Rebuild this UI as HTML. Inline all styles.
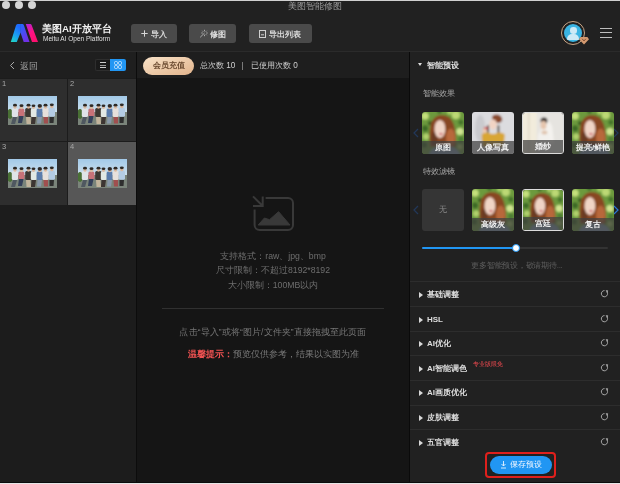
<!DOCTYPE html>
<html><head><meta charset="utf-8">
<style>
*{margin:0;padding:0;box-sizing:border-box}
html,body{width:620px;height:484px;overflow:hidden;background:#212121;font-family:"Liberation Sans",sans-serif;color:#ddd}
.a{position:absolute}
.t,.btn span,.acc,.lbl,.gs{will-change:transform}
.t{white-space:nowrap;line-height:10px}
.dot{width:8px;height:8px;border-radius:50%;background:#d4d4d4;top:1px}
.btn{background:#4a4a4a;border-radius:3px;height:19px;top:24px;font-size:8.3px;font-weight:bold;color:#dcdcdc;line-height:19px}
.cell{background:#2e2e2e}
.num{font-size:7.5px;color:#a8a8a8;left:2px;top:0.5px;line-height:8px;will-change:transform}
.ph{left:8px;top:17px;width:49px;height:29px;overflow:hidden;
 background:linear-gradient(180deg,#9cc8e8 0%,#b6d6ee 40%,#7a8a80 62%,#606860 100%)}
.tile{width:42px;height:42px;border-radius:3px;overflow:hidden}
.lbl{left:0;bottom:0;width:100%;height:13px;background:rgba(64,64,64,.72);font-size:8px;font-weight:bold;line-height:13px;text-align:center;color:#f0f0f0;white-space:nowrap}
.sep{left:410px;width:210px;height:1px;background:#2d2d2d}
.tri{margin-top:0.5px;width:0;height:0;border-top:3px solid transparent;border-bottom:3px solid transparent;border-left:4px solid #d8d8d8}
.acc{left:427px;font-size:8px;font-weight:bold;color:#dedede;line-height:10px;white-space:nowrap;margin-top:1px}
.rf{left:601px}
</style></head>
<body>
<svg width="0" height="0" style="position:absolute">
<defs>
<filter id="bl" x="-5%" y="-5%" width="110%" height="110%"><feGaussianBlur stdDeviation="0.6"/></filter>
<filter id="bl2" x="-5%" y="-5%" width="110%" height="110%"><feGaussianBlur stdDeviation="1.1"/></filter>
<linearGradient id="sky" x1="0" y1="0" x2="0" y2="1"><stop offset="0" stop-color="#a0c8e8"/><stop offset="1" stop-color="#cce0ee"/></linearGradient>
<symbol id="grp" viewBox="0 0 49 29">
 <g filter="url(#bl)">
 <rect x="-1" y="-1" width="51" height="17" fill="url(#sky)"/>
 <rect x="-1" y="16" width="51" height="14" fill="#7a847a"/>
 <ellipse cx="2" cy="18" rx="3" ry="5" fill="#4a7036"/>
 <g>
  <rect x="3.8" y="12" width="6.2" height="9" rx="1.5" fill="#dfe4e8"/>
  <rect x="10.4" y="12.5" width="6" height="8" rx="1.5" fill="#c87278"/>
  <rect x="17.2" y="12" width="6.4" height="9" rx="1.5" fill="#3e3832"/>
  <rect x="22.8" y="12.5" width="6" height="8.5" rx="1.5" fill="#e2e8e4"/>
  <rect x="28.6" y="12.5" width="6" height="8.5" rx="1.5" fill="#5a7cac"/>
  <rect x="34.6" y="12" width="6.2" height="9" rx="1.5" fill="#e6e0dc"/>
  <rect x="40.6" y="11.8" width="6.4" height="9" rx="1.5" fill="#b4cce4"/>
 </g>
 <g fill="#d8b8a0">
  <ellipse cx="7" cy="10.8" rx="1.7" ry="1.9"/><ellipse cx="13.5" cy="11.3" rx="1.7" ry="1.9"/><ellipse cx="20.5" cy="10.8" rx="1.7" ry="1.9"/><ellipse cx="25.5" cy="11.3" rx="1.6" ry="1.8"/><ellipse cx="31.8" cy="11.3" rx="1.8" ry="1.9"/><ellipse cx="37.5" cy="10.8" rx="1.7" ry="1.9"/><ellipse cx="43.8" cy="10.4" rx="1.7" ry="1.9"/>
 </g>
 <g fill="#2e2a28">
  <ellipse cx="7" cy="9.2" rx="2" ry="1.4"/><ellipse cx="13.5" cy="9.7" rx="2" ry="1.4"/><ellipse cx="20.5" cy="9.2" rx="2" ry="1.4"/><ellipse cx="25.5" cy="9.7" rx="1.9" ry="1.3"/><ellipse cx="31.8" cy="9.9" rx="2.2" ry="1.8"/><ellipse cx="37.5" cy="9.2" rx="2" ry="1.4"/><ellipse cx="43.8" cy="8.8" rx="2" ry="1.4"/>
 </g>
 <g>
  <path d="M5 21 L9 21 L7 28 L3 28 Z" fill="#505860"/>
  <path d="M11 20 L15.5 20 L14 27 L10 27 Z" fill="#34405a"/>
  <path d="M18 21 L22.5 21 L23 28 L18.5 28 Z" fill="#c2b49c"/>
  <path d="M23.5 21 L28 21 L27 28 L23 28 Z" fill="#3c3430"/>
  <path d="M29.5 21 L34 21 L33 27.5 L29 27.5 Z" fill="#8898aa"/>
  <path d="M35.5 21 L40 21 L40 27.5 L36 27.5 Z" fill="#a05050"/>
  <path d="M41.5 21 L46 21 L45.5 27 L41.5 27 Z" fill="#2e2e2e"/>
 </g>
 </g>
</symbol>
<symbol id="prt" viewBox="0 0 41 41">
 <g filter="url(#bl2)">
 <rect x="-2" y="-2" width="45" height="45" fill="#6c9a3e"/>
 <circle cx="3" cy="4" r="3.5" fill="#c4e07c"/><circle cx="8" cy="11" r="2.2" fill="#345e22"/><circle cx="33" cy="3" r="4" fill="#bcd874"/><circle cx="38" cy="10" r="2.5" fill="#44742c"/><circle cx="37" cy="19" r="3.5" fill="#d0e490"/>
 <circle cx="3" cy="16" r="3" fill="#3e6a28"/><circle cx="4" cy="24" r="3" fill="#b0d06c"/><circle cx="2" cy="32" r="3" fill="#3e6a28"/><circle cx="38" cy="27" r="3" fill="#507e34"/><circle cx="37" cy="34" r="2.5" fill="#a8c868"/>
 <circle cx="17" cy="-1" r="2.5" fill="#3e6e2a"/><circle cx="27" cy="0" r="2.5" fill="#a8cc68"/>
 <path d="M8 34 Q6 20 9 10 Q13 3 19 3 Q28 3 31 12 Q34 22 33 34 Z" fill="#884624"/>
 <ellipse cx="28" cy="25" rx="4.5" ry="9" fill="#b8683a"/>
 <ellipse cx="12" cy="26" rx="3" ry="7" fill="#6a3a20"/>
 <ellipse cx="17.5" cy="16.5" rx="5.3" ry="8.8" fill="#f0d4c6"/>
 <ellipse cx="18.5" cy="21.5" rx="1.6" ry="0.9" fill="#c84858"/>
 <ellipse cx="22" cy="42" rx="15" ry="9" fill="#8098b0"/>
 </g>
</symbol>
<symbol id="prt2" viewBox="0 0 41 41">
 <g filter="url(#bl2)">
 <rect x="-2" y="-2" width="45" height="45" fill="#dcdcdf"/>
 <ellipse cx="8" cy="16" rx="5" ry="13" fill="#cacace"/>
 <ellipse cx="24.5" cy="6.5" rx="5.2" ry="4" fill="#8a4a2c" transform="rotate(20 24.5 6.5)"/>
 <ellipse cx="20.5" cy="12" rx="3.8" ry="5" fill="#f2d4c4"/>
 <rect x="14.8" y="13" width="1.6" height="11" fill="#3a2a20"/>
 <rect x="25" y="13" width="1.6" height="11" fill="#3a2a20"/>
 <ellipse cx="13.5" cy="16" rx="2.2" ry="1.6" fill="#c83848"/>
 <rect x="10.5" y="16" width="3.5" height="10" fill="#ecc8b0"/>
 <path d="M9.5 22 Q12 19.5 16 20 Q20.5 23 25 20 Q30 19.5 32 22 L31 34 L10 34 Z" fill="#d8a634"/>
 </g>
</symbol>
<symbol id="prt3" viewBox="0 0 41 41">
 <g filter="url(#bl2)">
 <rect x="-2" y="-2" width="45" height="45" fill="#e6e4e0"/>
 <rect x="-2" y="-2" width="16" height="45" fill="#f2ecdc"/>
 <rect x="5" y="-2" width="2" height="45" fill="#e4dccc"/>
 <path d="M18 8 Q26 4 30 14 L32 32 L18 32 Z" fill="#f4f2ee"/>
 <ellipse cx="21.5" cy="8" rx="3.5" ry="3.5" fill="#2a2220"/>
 <ellipse cx="21" cy="12.5" rx="3" ry="4.5" fill="#e6c6ae"/>
 <ellipse cx="21" cy="26" rx="6" ry="9" fill="#f2f0ec"/>
 <ellipse cx="22" cy="20" rx="3" ry="2" fill="#e0c4ae"/>
 </g>
</symbol>
</defs></svg>
<!-- top light line -->
<div class="a" style="left:0;top:0;width:620px;height:1px;background:#d0d0d0"></div>
<div class="a dot" style="left:2px"></div>
<div class="a dot" style="left:15px"></div>
<div class="a dot" style="left:28px"></div>
<div class="a t" style="left:288px;top:1px;font-size:8.7px;color:#9a9a9a">美图智能修图</div>

<!-- logo -->
<svg class="a" style="left:10px;top:23px" width="30" height="20" viewBox="0 0 30 20">
  <defs>
    <linearGradient id="lgA" x1="0" y1="1" x2="0.45" y2="0"><stop offset="0" stop-color="#22dcc0"/><stop offset="0.5" stop-color="#1aa0f0"/><stop offset="1" stop-color="#1e6cff"/></linearGradient>
    <linearGradient id="lgB" x1="0" y1="0" x2="0.5" y2="1"><stop offset="0" stop-color="#1e6cff"/><stop offset="1" stop-color="#7030e8"/></linearGradient>
    <linearGradient id="lgC" x1="0" y1="0" x2="0.6" y2="1"><stop offset="0" stop-color="#a824e0"/><stop offset="0.55" stop-color="#ff1284"/><stop offset="1" stop-color="#ff1070"/></linearGradient>
  </defs>
  <path d="M0.8 19 L6 2.4 Q6.5 1 8 1 L10.6 1 L10.6 9.5 L6.8 19 Z" fill="url(#lgA)"/>
  <path d="M10.2 1 L12.5 1 Q13.5 1 14 2.4 L19.5 19 L13.7 19 L10.3 9 L10.2 9.3 Z" fill="url(#lgB)"/>
  <path d="M15.8 1 L20.3 1 Q21.3 1 21.8 2.4 L28 19 L22 19 Z" fill="url(#lgC)"/>
</svg>
<div class="a t" style="left:42px;top:23px;font-size:9.8px;font-weight:bold;color:#f2f2f2;line-height:11px">美图AI开放平台</div>
<div class="a t" style="left:43px;top:35px;font-size:6.5px;color:#e0e0e0;line-height:7px">Meitu AI Open Platform</div>

<div class="a btn" style="left:131px;width:46px">
  <svg class="a" style="left:10px;top:6px" width="7" height="7" viewBox="0 0 7 7"><path d="M3.5 0.3 V6.7 M0.3 3.5 H6.7" stroke="#d8d8d8" stroke-width="1"/></svg>
  <span class="a" style="left:19.5px;top:0.5px">导入</span></div>
<div class="a btn" style="left:189px;width:47px">
  <svg class="a" style="left:10px;top:4.5px" width="10" height="10" viewBox="0 0 10 10"><g stroke="#b8b8b8" stroke-width="0.9" fill="none"><path d="M5.5 4 L1.2 8.3"/><path d="M5.5 0.8 V2.3 M5.5 5.7 V7.2 M2.3 4 H3.8 M7.2 4 H8.7 M3.3 1.8 L4.2 2.7 M7.7 1.8 L6.8 2.7 M7.7 6.2 L6.8 5.3"/></g></svg>
  <span class="a" style="left:21px;top:0.5px">修图</span></div>
<div class="a btn" style="left:249px;width:63px">
  <svg class="a" style="left:10px;top:5.5px" width="7" height="8" viewBox="0 0 7 8"><rect x="0.5" y="0.5" width="6" height="7" fill="none" stroke="#d0d0d0" stroke-width="1"/><path d="M2 4.8 H5" stroke="#d0d0d0" stroke-width="1"/></svg>
  <span class="a" style="left:20px;top:0.5px">导出列表</span></div>

<!-- avatar -->
<div class="a" style="left:561px;top:21px;width:24px;height:24px;border-radius:50%;border:1.2px solid #c8a484"></div>
<div class="a" style="left:564px;top:24px;width:18px;height:18px;border-radius:50%;background:#3ab4e2;overflow:hidden">
  <div class="a" style="left:6px;top:3px;width:6.5px;height:6.5px;border-radius:50%;background:#cdeaf6"></div>
  <div class="a" style="left:3px;top:10px;width:12px;height:6px;border-radius:5px 5px 1px 1px;background:#cdeaf6"></div>
</div>
<div class="a" style="left:579px;top:36.5px;width:10px;height:8px;background:#d49a70;clip-path:polygon(20% 0,80% 0,100% 35%,50% 100%,0 35%)"></div><svg class="a" style="left:581px;top:38px" width="6" height="4" viewBox="0 0 6 4"><path d="M1.2 0.8 L3 3 L4.8 0.8" stroke="#7a4a30" stroke-width="0.9" fill="none"/></svg>
<div class="a" style="left:600px;top:27.6px;width:12px;height:1.3px;background:#bdbdbd"></div>
<div class="a" style="left:600px;top:32.1px;width:12px;height:1.3px;background:#bdbdbd"></div>
<div class="a" style="left:600px;top:36.6px;width:12px;height:1.3px;background:#bdbdbd"></div>

<!-- header line -->
<div class="a" style="left:0;top:51px;width:620px;height:1px;background:#2b2b2b"></div>

<!-- LEFT PANEL -->
<div class="a" style="left:0;top:52px;width:136px;height:432px;background:#1c1c1c"></div>
<div class="a" style="left:0;top:52px;width:136px;height:26px;background:#1f1f1f"></div>
<svg class="a" style="left:9px;top:61px" width="6" height="9" viewBox="0 0 6 9"><path d="M5 1 L1.5 4.5 L5 8" stroke="#aaa" stroke-width="1" fill="none"/></svg>
<div class="a t" style="left:20px;top:61px;font-size:8.5px;color:#a0a0a0">返回</div>
<div class="a" style="left:95px;top:59px;width:15px;height:12px;border:1px solid #2e2e2e;border-right:none;background:#1a1a1a;border-radius:2px 0 0 2px"></div>
<div class="a" style="left:100px;top:62px;width:6px;height:1px;background:#ccc"></div>
<div class="a" style="left:100px;top:64.5px;width:6px;height:1px;background:#999"></div>
<div class="a" style="left:100px;top:67px;width:6px;height:1px;background:#ccc"></div>
<div class="a" style="left:110px;top:59px;width:16px;height:12px;background:#2196f3;border-radius:0 2px 2px 0"></div>
<svg class="a" style="left:114px;top:61px" width="8" height="8" viewBox="0 0 8 8"><g fill="none" stroke="#d8ecff" stroke-width="0.8"><rect x="0.5" y="0.5" width="3" height="3" rx="1"/><rect x="4.5" y="0.5" width="3" height="3" rx="1"/><rect x="0.5" y="4.5" width="3" height="3" rx="1"/><rect x="4.5" y="4.5" width="3" height="3" rx="1"/></g></svg>

<div class="a cell" style="left:0;top:79px;width:67px;height:62px"><div class="a num">1</div><svg class="a ph" viewBox="0 0 49 29"><use href="#grp"/></svg></div>
<div class="a cell" style="left:68px;top:79px;width:68px;height:62px"><div class="a num">2</div><svg class="a ph" style="left:9.5px" viewBox="0 0 49 29"><use href="#grp"/></svg></div>
<div class="a cell" style="left:0;top:142px;width:67px;height:62.5px"><div class="a num">3</div><svg class="a ph" viewBox="0 0 49 29"><use href="#grp"/></svg></div>
<div class="a cell" style="left:68px;top:142px;width:68px;height:62.5px;background:#575757"><div class="a num">4</div><svg class="a ph" style="left:9.5px" viewBox="0 0 49 29"><use href="#grp"/></svg></div>

<div class="a" style="left:136px;top:52px;width:1px;height:432px;background:#0c0c0c"></div>

<!-- CENTER -->
<div class="a" style="left:137px;top:52px;width:272px;height:432px;background:#151515"></div>
<div class="a" style="left:137px;top:52px;width:272px;height:26px;background:#1e1e1e"></div>
<div class="a gs" style="left:143px;top:56.5px;width:51px;height:18px;border-radius:9px;background:linear-gradient(160deg,#f8e2c8,#e2b48c);color:#6a4a30;font-size:8px;font-weight:bold;line-height:18px;text-align:center">会员充值</div>
<div class="a t" style="left:200px;top:61px;font-size:8.2px;color:#d0d0d0">总次数 10</div>
<div class="a" style="left:242px;top:62px;width:1px;height:8px;background:#7a7a7a"></div>
<div class="a t" style="left:251px;top:61px;font-size:8.2px;color:#d0d0d0">已使用次数 0</div>

<svg class="a" style="left:250px;top:193px" width="48" height="42" viewBox="0 0 48 42">
  <path d="M15.6 5 H38 A5 5 0 0 1 43 10 V32 A5 5 0 0 1 38 37 H9.6 A5 5 0 0 1 4.6 32 V16.4" fill="none" stroke="#393939" stroke-width="2"/>
  <path d="M3 3.4 L12.7 13 M12.7 3.4 V13 H3" fill="none" stroke="#393939" stroke-width="2"/>
  <path d="M8.2 32 L14.4 25 L19.5 26.7 L28.6 18.7 L40 32 Z" fill="#393939" stroke="#393939" stroke-width="1" stroke-linejoin="round"/>
</svg>
<div class="a t" style="left:137px;width:272px;text-align:center;top:251px;font-size:8.7px;color:#6e6e6e">支持格式：raw、jpg、bmp</div>
<div class="a t" style="left:137px;width:272px;text-align:center;top:265px;font-size:8.7px;color:#6e6e6e">尺寸限制：不超过8192*8192</div>
<div class="a t" style="left:137px;width:272px;text-align:center;top:280px;font-size:8.7px;color:#6e6e6e">大小限制：100MB以内</div>
<div class="a" style="left:162px;top:308px;width:222px;height:1px;background:#303030"></div>
<div class="a t" style="left:137px;width:272px;text-align:center;top:327px;font-size:8.5px;letter-spacing:0.1px;color:#767676">点击“导入”或将“图片/文件夹”直接拖拽至此页面</div>
<div class="a t" style="left:137px;width:272px;text-align:center;top:349px;font-size:8.5px;color:#7a7a7a"><span style="color:#f05252;font-weight:bold">温馨提示：</span>预览仅供参考，结果以实图为准</div>

<div class="a" style="left:409px;top:52px;width:1px;height:432px;background:#0a0a0a"></div>

<!-- RIGHT -->
<div class="a" style="left:410px;top:52px;width:210px;height:432px;background:#212121"></div>
<div class="a" style="left:418px;top:63px;width:0;height:0;border-left:2.5px solid transparent;border-right:2.5px solid transparent;border-top:3.5px solid #ddd"></div>
<div class="a t" style="left:427px;top:60.5px;font-size:8px;font-weight:bold;color:#e0e0e0">智能预设</div>
<div class="a t" style="left:422.5px;top:88.5px;font-size:7.8px;color:#a8a8a8">智能效果</div>

<svg class="a" style="left:413px;top:128px" width="6" height="10" viewBox="0 0 6 10"><path d="M5 1 L1 5 L5 9" stroke="#22385a" stroke-width="1.2" fill="none"/></svg>
<svg class="a" style="left:613px;top:128px" width="6" height="10" viewBox="0 0 6 10"><path d="M1 1 L5 5 L1 9" stroke="#22385a" stroke-width="1.2" fill="none"/></svg>

<div class="a tile" style="left:422px;top:112px;"><svg class="a" style="left:0;top:0;width:100%;height:100%" viewBox="0 0 41 41" preserveAspectRatio="none"><use href="#prt"/></svg><div class="a lbl">原图</div></div>
<div class="a tile" style="left:472px;top:112px;"><svg class="a" style="left:0;top:0;width:100%;height:100%" viewBox="0 0 41 41" preserveAspectRatio="none"><use href="#prt2"/></svg><div class="a lbl">人像写真</div></div>
<div class="a tile" style="left:522px;top:112px;border:1.5px solid #dcdcdc;"><svg class="a" style="left:0;top:0;width:100%;height:100%" viewBox="0 0 41 41" preserveAspectRatio="none"><use href="#prt3"/></svg><div class="a lbl">婚纱</div></div>
<div class="a tile" style="left:572px;top:112px;"><svg class="a" style="left:0;top:0;width:100%;height:100%" viewBox="0 0 41 41" preserveAspectRatio="none"><use href="#prt"/></svg><div class="a lbl">提亮/鲜艳</div></div>

<div class="a t" style="left:422.5px;top:166.5px;font-size:7.8px;color:#a8a8a8">特效滤镜</div>
<svg class="a" style="left:413px;top:205px" width="6" height="10" viewBox="0 0 6 10"><path d="M5 1 L1 5 L5 9" stroke="#22385a" stroke-width="1.2" fill="none"/></svg>
<svg class="a" style="left:613px;top:205px" width="6" height="10" viewBox="0 0 6 10"><path d="M1 1 L5 5 L1 9" stroke="#2a78d8" stroke-width="1.2" fill="none"/></svg>
<div class="a tile gs" style="left:422px;top:189px;background:#353535;color:#8a8a8a;font-size:8px;text-align:center;line-height:42px">无</div>
<div class="a tile" style="left:472px;top:189px;"><svg class="a" style="left:0;top:0;width:100%;height:100%" viewBox="0 0 41 41" preserveAspectRatio="none"><use href="#prt"/></svg><div class="a lbl">高级灰</div></div>
<div class="a tile" style="left:522px;top:189px;border:1.5px solid #dcdcdc;"><svg class="a" style="left:0;top:0;width:100%;height:100%" viewBox="0 0 41 41" preserveAspectRatio="none"><use href="#prt"/></svg><div class="a lbl">宫廷</div></div>
<div class="a tile" style="left:572px;top:189px;"><svg class="a" style="left:0;top:0;width:100%;height:100%" viewBox="0 0 41 41" preserveAspectRatio="none"><use href="#prt"/></svg><div class="a lbl">复古</div></div>

<div class="a" style="left:422px;top:246.5px;width:186px;height:2px;border-radius:1px;background:#333"></div>
<div class="a" style="left:422px;top:246.5px;width:94px;height:2px;border-radius:1px;background:#2196f3"></div>
<div class="a" style="left:511.5px;top:243.5px;width:8px;height:8px;border-radius:50%;background:#fff;border:1px solid #2196f3"></div>
<div class="a t" style="left:411.5px;width:210px;text-align:center;top:261px;font-size:8px;letter-spacing:-0.25px;color:#5e5e5e">更多智能预设，敬请期待...</div>

<div class="a sep" style="top:281px"></div>
<div class="a sep" style="top:306px"></div>
<div class="a sep" style="top:331px"></div>
<div class="a sep" style="top:355px"></div>
<div class="a sep" style="top:380px"></div>
<div class="a sep" style="top:405px"></div>
<div class="a sep" style="top:429px"></div>

<div class="a tri" style="left:419px;top:291px"></div>
<div class="a tri" style="left:419px;top:316px"></div>
<div class="a tri" style="left:419px;top:340px"></div>
<div class="a tri" style="left:419px;top:365px"></div>
<div class="a tri" style="left:419px;top:389px"></div>
<div class="a tri" style="left:419px;top:414px"></div>
<div class="a tri" style="left:419px;top:439px"></div>

<div class="a acc" style="top:289px">基础调整</div>
<div class="a acc" style="top:314px">HSL</div>
<div class="a acc" style="top:338px">AI优化</div>
<div class="a acc" style="top:363px">AI智能调色</div>
<div class="a t" style="left:473px;top:361px;font-size:6px;color:#ee4a50;line-height:7px">专业版限免</div>
<div class="a acc" style="top:387px">AI画质优化</div>
<div class="a acc" style="top:412px">皮肤调整</div>
<div class="a acc" style="top:437px">五官调整</div>

<!-- refresh icons -->
<svg class="a" style="left:600px;top:289px" width="9" height="9" viewBox="0 0 9 9"><path d="M7.04 3.02 A3.1 3.1 0 1 1 4.5 1.6" fill="none" stroke="#a8a8a8" stroke-width="1"/><path d="M5.6 1.2 L8.2 1.6 L7.2 3.9 Z" fill="#b8b8b8"/></svg>
<svg class="a" style="left:600px;top:314px" width="9" height="9" viewBox="0 0 9 9"><path d="M7.04 3.02 A3.1 3.1 0 1 1 4.5 1.6" fill="none" stroke="#a8a8a8" stroke-width="1"/><path d="M5.6 1.2 L8.2 1.6 L7.2 3.9 Z" fill="#b8b8b8"/></svg>
<svg class="a" style="left:600px;top:338px" width="9" height="9" viewBox="0 0 9 9"><path d="M7.04 3.02 A3.1 3.1 0 1 1 4.5 1.6" fill="none" stroke="#a8a8a8" stroke-width="1"/><path d="M5.6 1.2 L8.2 1.6 L7.2 3.9 Z" fill="#b8b8b8"/></svg>
<svg class="a" style="left:600px;top:363px" width="9" height="9" viewBox="0 0 9 9"><path d="M7.04 3.02 A3.1 3.1 0 1 1 4.5 1.6" fill="none" stroke="#a8a8a8" stroke-width="1"/><path d="M5.6 1.2 L8.2 1.6 L7.2 3.9 Z" fill="#b8b8b8"/></svg>
<svg class="a" style="left:600px;top:387px" width="9" height="9" viewBox="0 0 9 9"><path d="M7.04 3.02 A3.1 3.1 0 1 1 4.5 1.6" fill="none" stroke="#a8a8a8" stroke-width="1"/><path d="M5.6 1.2 L8.2 1.6 L7.2 3.9 Z" fill="#b8b8b8"/></svg>
<svg class="a" style="left:600px;top:412px" width="9" height="9" viewBox="0 0 9 9"><path d="M7.04 3.02 A3.1 3.1 0 1 1 4.5 1.6" fill="none" stroke="#a8a8a8" stroke-width="1"/><path d="M5.6 1.2 L8.2 1.6 L7.2 3.9 Z" fill="#b8b8b8"/></svg>
<svg class="a" style="left:600px;top:437px" width="9" height="9" viewBox="0 0 9 9"><path d="M7.04 3.02 A3.1 3.1 0 1 1 4.5 1.6" fill="none" stroke="#a8a8a8" stroke-width="1"/><path d="M5.6 1.2 L8.2 1.6 L7.2 3.9 Z" fill="#b8b8b8"/></svg>

<!-- save button -->
<div class="a" style="left:485px;top:452px;width:71px;height:26px;border:2px solid #e0201c;border-radius:4px"></div>
<div class="a" style="left:489.5px;top:456px;width:62px;height:17.5px;border-radius:9px;background:#2196f3"></div>
<svg class="a" style="left:500px;top:460px" width="7" height="9" viewBox="0 0 7 9"><path d="M3.5 1 V6 M1.5 4 L3.5 6 L5.5 4 M1 8 H6" stroke="#e8f4ff" stroke-width="0.9" fill="none"/></svg>
<div class="a t" style="left:510px;top:460px;font-size:8px;color:#f4f8ff">保存预设</div>

<!-- bottom light strip -->
<div class="a" style="left:0;top:482px;width:620px;height:1px;background:#0c0c0c"></div><div class="a" style="left:0;top:483px;width:620px;height:1px;background:#e6e6e6"></div>
</body></html>
